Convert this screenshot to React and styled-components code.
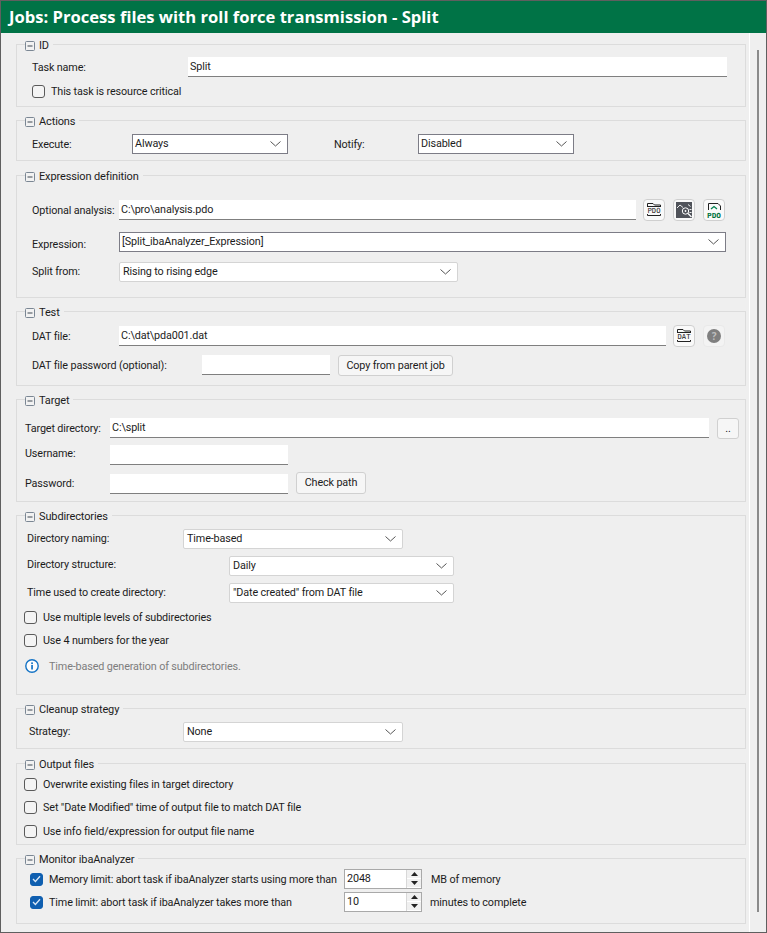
import React from "react";
import styled, { createGlobalStyle } from "styled-components";

const Global = createGlobalStyle`
  html, body { margin: 0; padding: 0; background: #efefef; }
  body { font-family: Roboto, "Noto Sans", sans-serif; font-size: 10.8px; letter-spacing: -0.13px; color: #1c1c1c; }
  * { box-sizing: border-box; }
`;

const Win = styled.div`
  width: 767px; height: 933px; border: 1px solid #5f5f5f; display: flex; flex-direction: column; background: #efefef; overflow: hidden;
`;
const Title = styled.div`
  height: 32px; flex: none; background: #007346; color: #fff; padding-left: 8px; letter-spacing: 0;
  font-family: "Open Sans", sans-serif; font-weight: 700; font-size: 16.6px; line-height: 31px; white-space: nowrap;
`;
const Main = styled.div`display: flex; flex: 1; min-height: 0;`;
const Content = styled.div`
  width: 749px; flex: none; padding: 11px 3px 0 15px; border-right: 1px solid #fff; display: flex; flex-direction: column;
`;
const Rail = styled.div`flex: 1; padding: 17px 0 0 7px;`;
const Thumb = styled.div`width: 2px; height: 862px; background: #8a8a8a;`;

const GroupBox = styled.section`
  position: relative; flex: none; height: ${p => p.$h}px; margin-bottom: ${p => p.$mb ?? 13}px;
  border: 1px solid #dcdcdc; padding-top: ${p => p.$pt}px;
`;
const Legend = styled.div`
  position: absolute; left: 8px; top: -7px; height: 15px; padding: 0 4px 0 0; background: #efefef;
  display: flex; align-items: center; gap: 4px; font-size: 11px; line-height: 15px;
`;
const Row = styled.div`
  display: flex; align-items: center; height: ${p => p.$h ?? 20}px; margin-top: ${p => p.$mt ?? 0}px; padding-left: ${p => p.$pl ?? 15}px;
`;
const Label = styled.span`
  flex: none; width: ${p => p.$w}px; margin-left: ${p => p.$ml ?? 0}px; white-space: nowrap;
  margin-top: ${p => p.$dy ?? 0}px;
`;
const Input = styled.div`
  flex: none; width: ${p => p.$w}px; height: 20px; background: #fff; border-bottom: 1px solid #7f7f7f; padding-left: 2px;
  line-height: 20px; white-space: nowrap;
`;
const Select = styled.div`
  flex: none; width: ${p => p.$w}px; height: 20px; background: #fff; border: 1px solid ${p => (p.$strong ? "#7c7c86" : "#d4d4d4")};
  border-radius: ${p => (p.$strong ? 0 : 2)}px; padding: 0 6px 0 ${p => (p.$strong ? 2 : 3)}px; display: flex; align-items: center; justify-content: space-between; line-height: 18px;
`;
const Button = styled.div`
  flex: none; width: ${p => p.$w}px; height: ${p => p.$h ?? 21}px; margin-left: 8px; margin-bottom: ${p => p.$mb ?? 0}px;
  border: 1px solid #d0d0d0; border-radius: 3px; background: #f6f6f6;
  display: flex; align-items: center; justify-content: center;
`;
const IconBtn = styled.div`
  flex: none; width: 22px; height: 22px; margin-left: ${p => p.$ml ?? 8}px; border: 1px solid ${p => (p.$faint ? "#e9e9e9" : "#cfcfcf")}; border-radius: 4px;
  background: ${p => (p.$faint ? "#f3f3f3" : "#f9f9f9")}; display: flex; align-items: center; justify-content: center;
`;
const CheckBox = styled.span`
  flex: none; width: 13px; height: 13px; border-radius: 3px; margin-right: 6px;
  border: 1px solid ${p => (p.$on ? "#0f5fb0" : "#5a5a5a")}; background: ${p => (p.$on ? "#0f5fb0" : "#f4f4f4")};
  display: flex; align-items: center; justify-content: center;
`;
const Check = styled.span`white-space: nowrap; flex: none; width: ${p => (p.$w ? `${p.$w}px` : "auto")};`;
const Info = styled.span`flex: none; color: #7d7d7d; margin-left: 10px;`;
const Spin = styled.div`
  flex: none; width: 78px; height: 20px; background: #fff; border: 1px solid #a9a9a9; display: flex; justify-content: space-between;
  padding-left: 2px; line-height: 18px;
`;
const SpinBtns = styled.div`
  width: 15px; display: flex; flex-direction: column; border-left: 1px solid #d8d8d8;
`;
const SpinBtn = styled.div`
  flex: 1; display: flex; align-items: center; justify-content: center; background: #f0f0f0; border-bottom: 1px solid #fff;
`;
const Unit = styled.span`margin-left: ${p => p.$ml}px; white-space: nowrap;`;

const Minus = () => (
  <svg width="10" height="10" viewBox="0 0 10 10"><rect x="0.5" y="0.5" width="9" height="9" rx="1" fill="#f2f2f2" stroke="#7b8794"/><path d="M2.5 5h5" stroke="#3c4650"/></svg>
);
const Chevron = () => (
  <svg width="11" height="6" viewBox="0 0 11 6"><path d="M.5.5 5.500 5 10.500.5" fill="none" stroke="#555"/></svg>
);
const Tick = () => (
  <svg width="9" height="8" viewBox="0 0 9 8"><path d="M1 4l2.400 2.500L8 1.200" fill="none" stroke="#d9e8f7" strokeWidth="1.300"/></svg>
);
const FolderIcon = ({ label }) => (
  <svg width="16" height="14" viewBox="0 0 16 14">
    <path d="M1.500 3V.5H7L8.500 2H14.500V3M1 3.500H15" fill="none" stroke="#222" strokeWidth="1"/>
    <text x="1.500" y="10" textLength="13" lengthAdjust="spacingAndGlyphs" fontFamily="DejaVu Sans Mono, monospace" fontSize="7" letterSpacing="0" fill="#222">{label}</text>
    <path d="M1.500 11v1.500h13V11" fill="none" stroke="#222"/>
  </svg>
);
const SearchIcon = () => (
  <svg width="16" height="16" viewBox="0 0 16 16">
    <rect width="16" height="16" fill="#50535a"/>
    <path d="M1 6l3-3 3 2.500M12 2.500l2.500 2M13.500 7.500h2M13.500 10.500h2" fill="none" stroke="#fff" strokeWidth="0.900"/>
    <circle cx="9.500" cy="9" r="3.200" fill="none" stroke="#fff" strokeWidth="1"/>
    <circle cx="9.500" cy="9" r="0.900" fill="#fff"/>
    <path d="M12 11.500l3.500 3.500" stroke="#fff" strokeWidth="1.200"/>
  </svg>
);
const PdoGreen = () => (
  <svg width="16" height="15" viewBox="0 0 16 15">
    <path d="M2.500 7V.5H12L14.500 3v4" fill="none" stroke="#222"/>
    <path d="M5 6l3-2.500L11 6" fill="none" stroke="#00824f" strokeWidth="1.300"/>
    <text x="1" y="14.500" textLength="14" lengthAdjust="spacingAndGlyphs" fontFamily="DejaVu Sans Mono, monospace" fontWeight="700" fontSize="7" letterSpacing="0" fill="#00733f">PDO</text>
  </svg>
);
const HelpIcon = () => (
  <svg width="14" height="14" viewBox="0 0 14 14">
    <circle cx="7" cy="7" r="7" fill="#7f7f7f"/>
    <text x="7" y="10.500" textAnchor="middle" fontFamily="Open Sans, sans-serif" fontWeight="700" fontSize="10" fill="#bdbdbd">?</text>
  </svg>
);
const InfoIcon = () => (
  <svg width="14" height="14" viewBox="0 0 14 14">
    <circle cx="7" cy="7" r="6.200" fill="#fdfdfd" stroke="#1473c5" strokeWidth="1.400"/>
    <rect x="6.200" y="6" width="1.700" height="4.500" fill="#1473c5"/>
    <rect x="6.200" y="3.400" width="1.700" height="1.700" fill="#1473c5"/>
  </svg>
);

const Group = ({ title, children, h, pt, mb }) => (
  <GroupBox $h={h} $pt={pt} $mb={mb}>
    <Legend><Minus />{title}</Legend>
    {children}
  </GroupBox>
);

const Sel = ({ w, strong, children }) => (
  <Select $w={w} $strong={strong}><span>{children}</span><Chevron /></Select>
);
const CheckRow = ({ pl, mt, children }) => (
  <Row $pl={pl} $mt={mt} $h={16}>
    <CheckBox />
    <Check>{children}</Check>
  </Row>
);
const Spinner = ({ children }) => (
  <Spin>
    <span>{children}</span>
    <SpinBtns>
      <SpinBtn><svg width="7" height="4" viewBox="0 0 7 4"><path d="M3.500 0 7 4H0z" fill="#222"/></svg></SpinBtn>
      <SpinBtn><svg width="7" height="4" viewBox="0 0 7 4"><path d="M0 0h7L3.500 4z" fill="#222"/></svg></SpinBtn>
    </SpinBtns>
  </Spin>
);

export default function App() {
  return (
    <>
      <Global />
      <Win>
        <Title>Jobs: Process files with roll force transmission - Split</Title>
        <Main>
          <Content>
            <Group title="ID" h={63} pt={12}>
              <Row><Label $w={156}>Task name:</Label><Input $w={539}>Split</Input></Row>
              <CheckRow mt={6}>This task is resource critical</CheckRow>
            </Group>
            <Group title="Actions" h={41} pt={13} mb={14}>
              <Row>
                <Label $w={100}>Execute:</Label><Sel w={156} strong>Always</Sel>
                <Label $w={84} $ml={46}>Notify:</Label><Sel w={156} strong>Disabled</Sel>
              </Row>
            </Group>
            <Group title="Expression definition" h={123} pt={24}>
              <Row>
                <Label $w={87}>Optional analysis:</Label><Input $w={517}>C:\pro\analysis.pdo</Input>
                <IconBtn $ml={7}><FolderIcon label="PDO" /></IconBtn><IconBtn><SearchIcon /></IconBtn><IconBtn><PdoGreen /></IconBtn>
              </Row>
              <Row $mt={12}><Label $w={87} $dy={5}>Expression:</Label><Sel w={607} strong>[Split_ibaAnalyzer_Expression]</Sel></Row>
              <Row $mt={10}><Label $w={87} $dy={-2}>Split from:</Label><Sel w={339}>Rising to rising edge</Sel></Row>
            </Group>
            <Group title="Test" h={75} pt={14}>
              <Row>
                <Label $w={87}>DAT file:</Label><Input $w={547}>C:\dat\pda001.dat</Input>
                <IconBtn $ml={7}><FolderIcon label="DAT" /></IconBtn><IconBtn $faint><HelpIcon /></IconBtn>
              </Row>
              <Row $mt={9}>
                <Label $w={170}>DAT file password (optional):</Label><Input $w={128} />
                <Button $w={115}>Copy from parent job</Button>
              </Row>
            </Group>
            <Group title="Target" h={103} pt={18}>
              <Row $pl={8}><Label $w={85}>Target directory:</Label><Input $w={599}>C:\split</Input><Button $w={22}>..</Button></Row>
              <Row $pl={8} $mt={7}><Label $w={85} $dy={-3}>Username:</Label><Input $w={178} /></Row>
              <Row $pl={8} $mt={9}><Label $w={85} $dy={-2}>Password:</Label><Input $w={178} /><Button $w={70} $h={22} $mb={3}>Check path</Button></Row>
            </Group>
            <Group title="Subdirectories" h={180} pt={13}>
              <Row $pl={10}><Label $w={156} $dy={-2}>Directory naming:</Label><Sel w={220}>Time-based</Sel></Row>
              <Row $pl={10} $mt={7}><Label $w={202} $dy={-4}>Directory structure:</Label><Sel w={225}>Daily</Sel></Row>
              <Row $pl={10} $mt={7}><Label $w={202} $dy={-2}>Time used to create directory:</Label><Sel w={225}>"Date created" from DAT file</Sel></Row>
              <CheckRow pl={7} mt={6}>Use multiple levels of subdirectories</CheckRow>
              <CheckRow pl={7} mt={7}>Use 4 numbers for the year</CheckRow>
              <Row $pl={8} $mt={8}><InfoIcon /><Info>Time-based generation of subdirectories.</Info></Row>
            </Group>
            <Group title="Cleanup strategy" h={41} pt={13} mb={14}>
              <Row $pl={12}><Label $w={154} $dy={-2}>Strategy:</Label><Sel w={220}>None</Sel></Row>
            </Group>
            <Group title="Output files" h={82} pt={12}>
              <CheckRow pl={7}>Overwrite existing files in target directory</CheckRow>
              <CheckRow pl={7} mt={7}>Set "Date Modified" time of output file to match DAT file</CheckRow>
              <CheckRow pl={7} mt={8}>Use info field/expression for output file name</CheckRow>
            </Group>
            <Group title="Monitor ibaAnalyzer" h={66} pt={10} mb={0}>
              <Row $pl={13}>
                <CheckBox $on><Tick /></CheckBox><Check $w={295}>Memory limit: abort task if ibaAnalyzer starts using more than</Check>
                <Spinner>2048</Spinner><Unit $ml={9}>MB of memory</Unit>
              </Row>
              <Row $pl={13} $mt={3}>
                <CheckBox $on><Tick /></CheckBox><Check $w={295}>Time limit: abort task if ibaAnalyzer takes more than</Check>
                <Spinner>10</Spinner><Unit $ml={8}>minutes to complete</Unit>
              </Row>
            </Group>
          </Content>
          <Rail><Thumb /></Rail>
        </Main>
      </Win>
    </>
  );
}
